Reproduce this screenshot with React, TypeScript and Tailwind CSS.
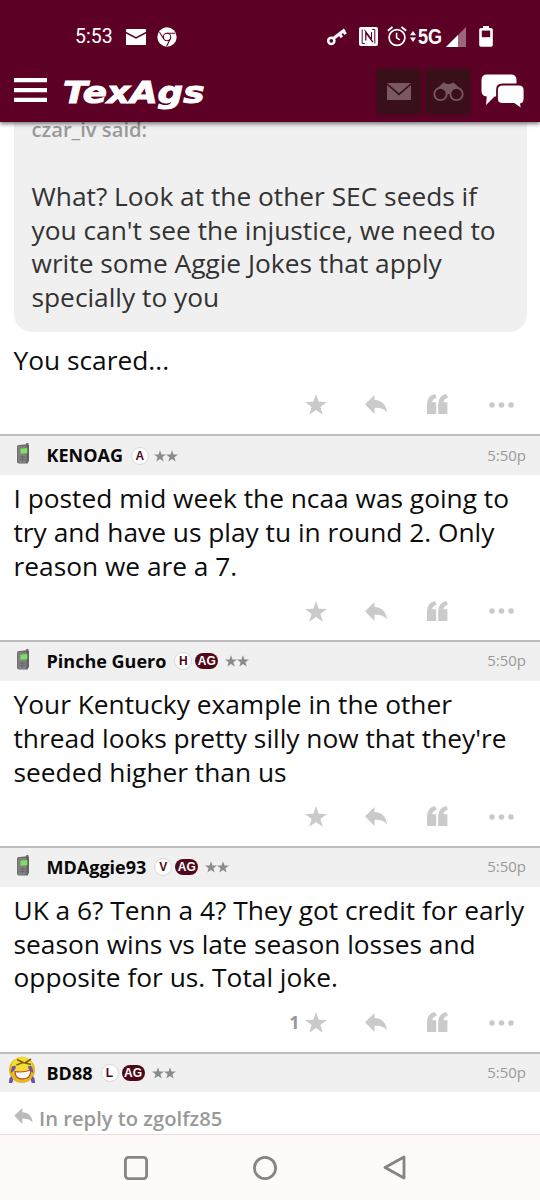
import React from 'react';

const Mail = ({ className = '' }: { className?: string }) => (
  <svg className={className} viewBox="0 0 24 17" fill="currentColor" preserveAspectRatio="none">
    <path d="M0 0h24L12 10.2z" />
    <path d="M0 2v15h24V2L12 12.4z" />
  </svg>
);

const StatusMail = () => (
  <svg className="ml-[13px] h-[16px] w-5 shrink-0" viewBox="0 0 20 16" fill="#fff">
    <path d="M.8 0h18.400q.8 0 .8.8v2L10 8 0 2.800v-2Q0 0 .8 0z" />
    <path d="M0 4.600 10 9.800 20 4.600V15.200q0 .8-.8.8H.8q-.8 0-.8-.8z" />
  </svg>
);

const Chrome = () => (
  <svg className="ml-[11px] h-5 w-5 shrink-0" viewBox="0 0 20 20">
    <circle cx="10" cy="10" r="9.7" fill="#fff" />
    <g stroke="#5c0025" strokeWidth="1.1" fill="none">
      <circle cx="10" cy="10" r="3.7" />
      <path d="M10 6.3h8.3M6.9 12 2.5 5.2M13.2 12l-3.6 7.3" />
    </g>
  </svg>
);

const Key = () => (
  <svg className="ml-[150px] h-5 w-5 shrink-0" viewBox="0 0 20 20" fill="none" stroke="#fff">
    <circle cx="4.3" cy="13.8" r="3.1" strokeWidth="2.5" />
    <path d="M7 11 17.8 2.7" strokeWidth="3" />
    <path d="m16.3 4 2.4 3.2M12.5 7.2l2.4 3" strokeWidth="3" />
  </svg>
);

const Nfc = () => (
  <svg className="ml-[12px] h-[19px] w-[19px] shrink-0" viewBox="0 0 19 19">
    <rect width="19" height="19" rx="2" fill="#fff" />
    <path d="M6.800 13.500V5.500l7 9.500" fill="none" stroke="#5c0025" strokeWidth="1.300" />
    <path d="M5.500 2.800 12.500 12V5M3.200 2.500v14h2.600M15.800 16.500v-14h-2.600" fill="none" stroke="#5c0025" strokeWidth="1" />
  </svg>
);

const Alarm = () => (
  <svg className="ml-[9px] h-[21px] w-[20px] shrink-0" viewBox="0 0 20 21" fill="none" stroke="#fff">
    <circle cx="10" cy="11.5" r="7.9" strokeWidth="1.7" />
    <path d="M9.6 6.8v5l3.3 2.1" strokeWidth="1.6" />
    <path d="M.8 4.8 5.5 1M19.2 4.8 14.5 1" strokeWidth="1.9" />
  </svg>
);

const StatusBar = () => (
  <div className="flex h-[61px] items-center pt-[12px] pl-[75px] font-['Roboto'] text-white">
    <span className="w-[38px] shrink-0 text-[19.5px] leading-none whitespace-nowrap">5:53</span>
    <StatusMail />
    <Chrome />
    <Key />
    <Nfc />
    <Alarm />
    <svg className="ml-[3px] h-[11px] w-[6px] shrink-0" viewBox="0 0 6 11" fill="#fff">
      <path d="M3 0 6 4.2H0zM3 11 6 6.5H0z" />
    </svg>
    <span className="mt-[3px] ml-[2px] w-[24px] shrink-0 font-['Liberation_Sans'] text-[21.500px] leading-none font-bold whitespace-nowrap">
      <span className="inline-block origin-left scale-x-[0.84]">5G</span>
    </span>
    <svg className="ml-[4px] h-5 w-5 shrink-0" viewBox="0 0 20 20" fill="#fff">
      <path d="M20 0v20H0z" opacity=".4" />
      <path d="M12 8v12H0z" />
    </svg>
    <svg className="mb-[1px] ml-[13px] h-[21px] w-[14px] shrink-0" viewBox="0 0 14 21" fill="none">
      <path d="M4 0h6v2h2q1.800 0 1.800 1.800v15.200q0 1.800-1.800 1.800H2Q.2 20.800.2 19V3.800Q.2 2 2 2h2z" fill="#fff" />
      <path d="M2.800 4.600h8.400v6.600H2.800z" fill="#5c0025" />
    </svg>
  </div>
);

const NavBar = () => (
  <div className="flex h-[61px] items-center">
    <svg className="mb-[3px] ml-[14px] h-[24px] w-[33px] shrink-0" viewBox="0 0 33 24" fill="#fff">
      <path d="M0 0h33v4.300H0zM0 9.900h33v4.300H0zM0 19.700h33V24H0z" />
    </svg>
    <div className="ml-[16px] h-[40px] w-[314px] font-['DejaVu_Sans'] text-[30px] leading-[41px] font-bold italic text-white">
      <span className="inline-block origin-left scale-x-[1.19] [-webkit-text-stroke:1px_#fff]">TexAgs</span>
    </div>
    <div className="flex gap-[5px]">
      <div className="flex h-[45px] w-[44px] items-center justify-center rounded-[2px] bg-[#391019] shadow-[0_0_3px_#391019]">
        <Mail className="h-[17px] w-6 text-[#795861]" />
      </div>
      <div className="flex h-[45px] w-[44px] items-center justify-center rounded-[2px] bg-[#391019] shadow-[0_0_3px_#391019]">
        <svg className="h-[20px] w-[31px]" viewBox="0 0 31 20" fill="none" stroke="#795861">
          <path d="m3.500 7 7-6.500 3.500 1.500h3l3.500-1.500 7 6.500-6 1-3.500 4h-5L9.500 8z" fill="#795861" stroke="none" />
          <circle cx="7.500" cy="12" r="6.200" strokeWidth="1.800" fill="#391019" />
          <circle cx="23.500" cy="12" r="6.200" strokeWidth="1.800" fill="#391019" />
        </svg>
      </div>
    </div>
    <svg className="ml-[11px] h-[36px] w-[44px] shrink-0" viewBox="0 0 44 36">
      <path d="M6 .5h24q5.500 0 5.500 5.500V17q0 5.500-5.500 5.500H13.500L5 31l.8-8.500Q.5 22 .5 17V6Q.5.5 6 .5z" fill="#fff" />
      <path d="M21.500 10.500H38q5.500 0 5.500 5.500v8q0 5.500-3.500 6.200L41 35.500l-8-5.500H21.500q-5.500 0-5.500-5.500V16q0-5.500 5.500-5.500z" fill="#fff" stroke="#5c0025" strokeWidth="1.800" />
    </svg>
  </div>
);

const Star = ({ className }: { className: string }) => (
  <svg className={className} viewBox="0 0 22 21" fill="currentColor">
    <path d="m11 0 2.700 7.800 8.300.1-6.600 5 2.400 7.900-6.800-4.700-6.800 4.700 2.400-7.900-6.600-5 8.300-.1z" />
  </svg>
);

const Reply = ({ className }: { className: string }) => (
  <svg className={className} viewBox="0 0 22 19" fill="currentColor">
    <path d="M0 9.300 9.500 0v4.900C17 5 21 9.500 22 17.200 18.500 13.200 14.500 12.600 9.500 12.900V19z" />
  </svg>
);

const Actions = ({ likes }: { likes?: string }) => (
  <div className="flex h-[55px] items-center justify-end pr-[26.500px] text-[#cacaca]">
    {likes && <span className="mr-[5px] text-[18px] font-bold text-[#999]">{likes}</span>}
    <Star className="h-[21px] w-[22px]" />
    <Reply className="ml-[38px] h-[19px] w-[22px]" />
    <svg className="mb-[1px] ml-[40px] h-5 w-[21px]" viewBox="0 0 21 20" fill="currentColor">
      <path d="M0 20V10Q.3 1.500 8 0l1.800 3.400Q5.300 5 5.300 8.300H9.200V20zM11.200 20V10Q11.500 1.500 19.200 0L21 3.400Q16.500 5 16.500 8.300h3.900V20z" />
    </svg>
    <svg className="ml-[41px] h-[6px] w-[25px]" viewBox="0 0 25 6" fill="currentColor">
      <circle cx="3" cy="3" r="2.800" />
      <circle cx="12.500" cy="3" r="2.800" />
      <circle cx="22" cy="3" r="2.800" />
    </svg>
  </div>
);

const Phone = () => (
  <svg className="h-[22px] w-[14px]" viewBox="0 0 14 22">
    <path d="M10 0h2.500v6H10z" fill="#777" />
    <path d="M3 2 11.500 1.300q1.500 0 1.500 1.500v15L11.500 20.500H3Q1 20.500 1 18.500V4q0-2 2-2z" fill="#626262" />
    <path d="M3 2.800h6.500q1 0 1 1V18q0 2-1.500 2H3.200Q1.600 20 1.600 18.500V4.200q0-1.400 1.400-1.400z" fill="#808080" />
    <path d="m4.500 5.800 6.800-.8v5.300l-6.800.5z" fill="#7ee05e" />
    <path d="M3.500 14h6M3.500 16.500h6M6.500 12.500v6" stroke="#636363" strokeWidth=".8" />
  </svg>
);

const Laugh = () => (
  <svg className="h-[28px] w-[28px]" viewBox="0 0 28 28">
    <circle cx="14" cy="14" r="13" fill="#e6b81c" />
    <circle cx="14" cy="11" r="10.500" fill="#f5dc35" />
    <path d="M4 10.500q3-1.500 4 .5-1 4-5.500 6zM24 10.500q-3-1.500-4 .5 1 4 5.500 6z" fill="#6b58a6" />
    <path d="m9 3.500 6 3-6.500 2.500M23 3l-6 4 6 1.500" fill="none" stroke="#795d18" strokeWidth="1.600" />
    <path d="M7 15.500q8 1.500 15.500-1.500.5 6-3.500 8-6 2-9.500-.5Q7 19.500 7 15.500z" fill="#fff" stroke="#b44a32" strokeWidth="1.200" />
    <path d="m.8 27 .8-5 2-2 1.600 4-1 3zM27.200 27l-.8-5-2-2-1.600 4 1 3z" fill="#6752ad" />
  </svg>
);

type Poster = { name: string; letter: string; ag?: boolean; laugh?: boolean };

const PostHeader = ({ name, letter, ag, laugh }: Poster) => (
  <div className="flex h-[40.800px] shrink-0 items-center border-t-2 border-[#bdbdbf] bg-[#f0f0f0] pr-[14px]">
    <div className={laugh ? 'w-[46.500px] pb-[6px] pl-[8px]' : 'w-[46.500px] pb-[3px] pl-[16px]'}>
      {laugh ? <Laugh /> : <Phone />}
    </div>
    <span className="pb-[0.500px] text-[18px] leading-none font-bold whitespace-nowrap text-[#080808]">{name}</span>
    <span className="ml-[8px] flex h-[18px] w-[18px] items-center justify-center rounded-full border border-[#d8d8d8] bg-white font-['Liberation_Sans'] text-[12px] leading-none font-bold text-[#500818]">
      {letter}
    </span>
    {ag && (
      <span className="ml-[3px] flex h-[16px] w-[23px] items-center justify-center rounded-full bg-[#500818] font-['Liberation_Sans'] text-[12px] leading-none font-bold text-white">
        AG
      </span>
    )}
    <span className={ag ? 'ml-[7px] flex text-[#8b8b8b]' : 'ml-[5px] flex text-[#8b8b8b]'}>
      <Star className="h-[12px] w-[12px]" />
      <Star className="h-[12px] w-[12px]" />
    </span>
    <span className="ml-auto pb-[1px] text-[15px] leading-none text-[#999]">5:50p</span>
  </div>
);

const Lines = ({ lines }: { lines: string[] }) => (
  <>
    {lines.map((line) => (
      <div key={line} className="whitespace-nowrap">{line}</div>
    ))}
  </>
);

const Post = ({ lines, likes, ...poster }: Poster & { lines: string[]; likes?: string }) => (
  <article className="h-[205.800px] shrink-0">
    <PostHeader {...poster} />
    <div className="px-[13.500px] pt-[7.300px] text-[26.300px] leading-[33.700px] text-[#0c0c0c]">
      <Lines lines={lines} />
    </div>
    <Actions likes={likes} />
  </article>
);

export default function App() {
  return (
    <div className="flex h-[1200px] w-[540px] flex-col overflow-hidden bg-white font-['Open_Sans',sans-serif]">
      <header className="z-10 h-[122px] shrink-0 bg-[#5c0025] shadow-[0_2px_4px_rgba(0,0,0,0.5)]">
        <StatusBar />
        <NavBar />
      </header>

      <main className="flex h-[1012px] shrink-0 flex-col overflow-hidden">
        <section className="h-[312.300px] shrink-0">
          <div className="mx-[13.500px] flex h-[209.500px] flex-col rounded-b-[18px] bg-[#f0f0f0] px-[18px] text-[26.300px] leading-[33.700px] text-[#333]">
            <div className="h-[58px] text-[20.200px] leading-[14px] font-semibold text-[#999]">czar_iv said:</div>
            <Lines
              lines={[
                'What? Look at the other SEC seeds if',
                "you can't see the injustice, we need to",
                'write some Aggie Jokes that apply',
                'specially to you',
              ]}
            />
          </div>
          <p className="px-[13.500px] pt-[12px] text-[26.300px] leading-[33.700px] text-[#0c0c0c]">You scared...</p>
          <Actions />
        </section>
        <Post
          name="KENOAG"
          letter="A"
          lines={['I posted mid week the ncaa was going to', 'try and have us play tu in round 2. Only', 'reason we are a 7.']}
        />
        <Post
          name="Pinche Guero"
          letter="H"
          ag
          lines={['Your Kentucky example in the other', "thread looks pretty silly now that they're", 'seeded higher than us']}
        />
        <Post
          name="MDAggie93"
          letter="V"
          ag
          likes="1"
          lines={['UK a 6? Tenn a 4? They got credit for early', 'season wins vs late season losses and', 'opposite for us. Total joke.']}
        />
        <PostHeader name="BD88" letter="L" ag laugh />
        <div className="flex shrink-0 items-center pt-[13px] pl-[14px] text-[20.200px] leading-[26px] font-semibold text-[#999]">
          <Reply className="mb-[4px] h-[16px] w-[19px] text-[#bbb]" />
          <span className="ml-[6px]">In reply to zgolfz85</span>
        </div>
      </main>

      <nav className="flex h-[66px] shrink-0 items-center border-t border-[#f2dcdb] bg-[#fefaf9] pl-[124px]">
        <svg className="h-6 w-6" viewBox="0 0 24 24" fill="none" stroke="#868484" strokeWidth="2.800">
          <rect x="1.400" y="1.400" width="21.200" height="21.200" rx="3" />
        </svg>
        <svg className="ml-[105px] h-6 w-6" viewBox="0 0 24 24" fill="none" stroke="#868484" strokeWidth="2.800">
          <circle cx="12" cy="12" r="10.600" />
        </svg>
        <svg className="ml-[106px] h-[25px] w-[23px]" viewBox="0 0 23 25" fill="none" stroke="#868484" strokeWidth="2.800" strokeLinejoin="round">
          <path d="M21 2v21L2 12.500z" />
        </svg>
      </nav>
    </div>
  );
}
